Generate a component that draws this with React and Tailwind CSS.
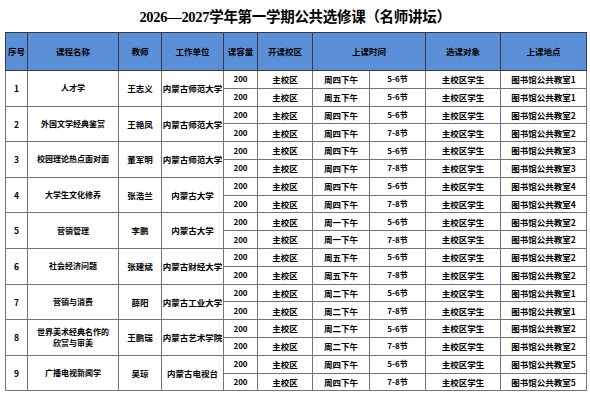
import React from 'react';

const courses = [
  { no: 1, name: '人才学', teacher: '王志义', unit: '内蒙古师范大学', slots: [['周四下午', '5-6节', '图书馆公共教室1'], ['周五下午', '5-6节', '图书馆公共教室1']] },
  { no: 2, name: '外国文学经典鉴赏', teacher: '王艳凤', unit: '内蒙古师范大学', slots: [['周四下午', '5-6节', '图书馆公共教室2'], ['周四下午', '7-8节', '图书馆公共教室2']] },
  { no: 3, name: '校园理论热点面对面', teacher: '董军明', unit: '内蒙古师范大学', slots: [['周四下午', '5-6节', '图书馆公共教室3'], ['周四下午', '7-8节', '图书馆公共教室3']] },
  { no: 4, name: '大学生文化修养', teacher: '张浩兰', unit: '内蒙古大学', slots: [['周四下午', '5-6节', '图书馆公共教室4'], ['周四下午', '7-8节', '图书馆公共教室4']] },
  { no: 5, name: '营销管理', teacher: '李鹏', unit: '内蒙古大学', slots: [['周一下午', '5-6节', '图书馆公共教室2'], ['周一下午', '7-8节', '图书馆公共教室2']] },
  { no: 6, name: '社会经济问题', teacher: '张建斌', unit: '内蒙古财经大学', slots: [['周五下午', '5-6节', '图书馆公共教室2'], ['周五下午', '7-8节', '图书馆公共教室2']] },
  { no: 7, name: '营销与消费', teacher: '薛阳', unit: '内蒙古工业大学', slots: [['周二下午', '5-6节', '图书馆公共教室1'], ['周二下午', '7-8节', '图书馆公共教室1']] },
  { no: 8, name: ['世界美术经典名作的', '欣赏与审美'], teacher: '王鹏瑞', unit: '内蒙古艺术学院', slots: [['周二下午', '5-6节', '图书馆公共教室2'], ['周二下午', '7-8节', '图书馆公共教室2']] },
  { no: 9, name: '广播电视新闻学', teacher: '吴琼', unit: '内蒙古电视台', slots: [['周四下午', '5-6节', '图书馆公共教室5'], ['周四下午', '7-8节', '图书馆公共教室5']] },
];

const td = 'border border-[#747474] text-center align-middle p-0 leading-none';
const th = 'border border-[#3a3a3a] text-center align-middle p-0 leading-none font-bold';

export default function App() {
  return (
    <div className="w-[590px] h-[400px] bg-white overflow-hidden font-['Noto_Sans_CJK_SC',sans-serif] text-black">
      {/* Title */}
      <div className="h-[32px] flex items-center justify-center pt-[4px]">
        <h1 className="text-[14.5px] font-bold tracking-[-0.3px] font-['Liberation_Serif','Noto_Sans_CJK_SC',serif]">
          2026—2027学年第一学期公共选修课（名师讲坛）
        </h1>
      </div>

      <table className="ml-[5px] w-[581px] table-fixed border-collapse text-[8.5px] font-bold">
        <colgroup>
          <col className="w-[22px]" />
          <col className="w-[91px]" />
          <col className="w-[43px]" />
          <col className="w-[62px]" />
          <col className="w-[34px]" />
          <col className="w-[55px]" />
          <col className="w-[57px]" />
          <col className="w-[56px]" />
          <col className="w-[75px]" />
          <col className="w-[86px]" />
        </colgroup>
        <thead>
          <tr className="h-[38px] bg-[#5b8fd8]">
            <th className={th}>序号</th>
            <th className={th}>课程名称</th>
            <th className={th}>教师</th>
            <th className={th}>工作单位</th>
            <th className={th}>课容量</th>
            <th className={th}>开课校区</th>
            <th className={th} colSpan={2}>上课时间</th>
            <th className={th}>选课对象</th>
            <th className={th}>上课地点</th>
          </tr>
        </thead>
        <tbody>
          {courses.map((c) =>
            c.slots.map((s, i) => (
              <tr key={`${c.no}-${i}`} className="h-[17.8px]">
                {i === 0 && (
                  <>
                    <td rowSpan={2} className={td}>{c.no}</td>
                    <td rowSpan={2} className={`${td} text-[8px]`}>
                      {Array.isArray(c.name) ? (
                        <div className="flex flex-col gap-[3px]">
                          {c.name.map((l) => <span key={l}>{l}</span>)}
                        </div>
                      ) : c.name}
                    </td>
                    <td rowSpan={2} className={td}>{c.teacher}</td>
                    <td rowSpan={2} className={`${td} whitespace-nowrap`}>{c.unit}</td>
                  </>
                )}
                <td className={`${td} text-[8px]`}>200</td>
                <td className={td}>主校区</td>
                <td className={td}>{s[0]}</td>
                <td className={`${td} text-[8px]`}>{s[1]}</td>
                <td className={td}>主校区学生</td>
                <td className={td}>{s[2]}</td>
              </tr>
            ))
          )}
        </tbody>
      </table>
    </div>
  );
}
